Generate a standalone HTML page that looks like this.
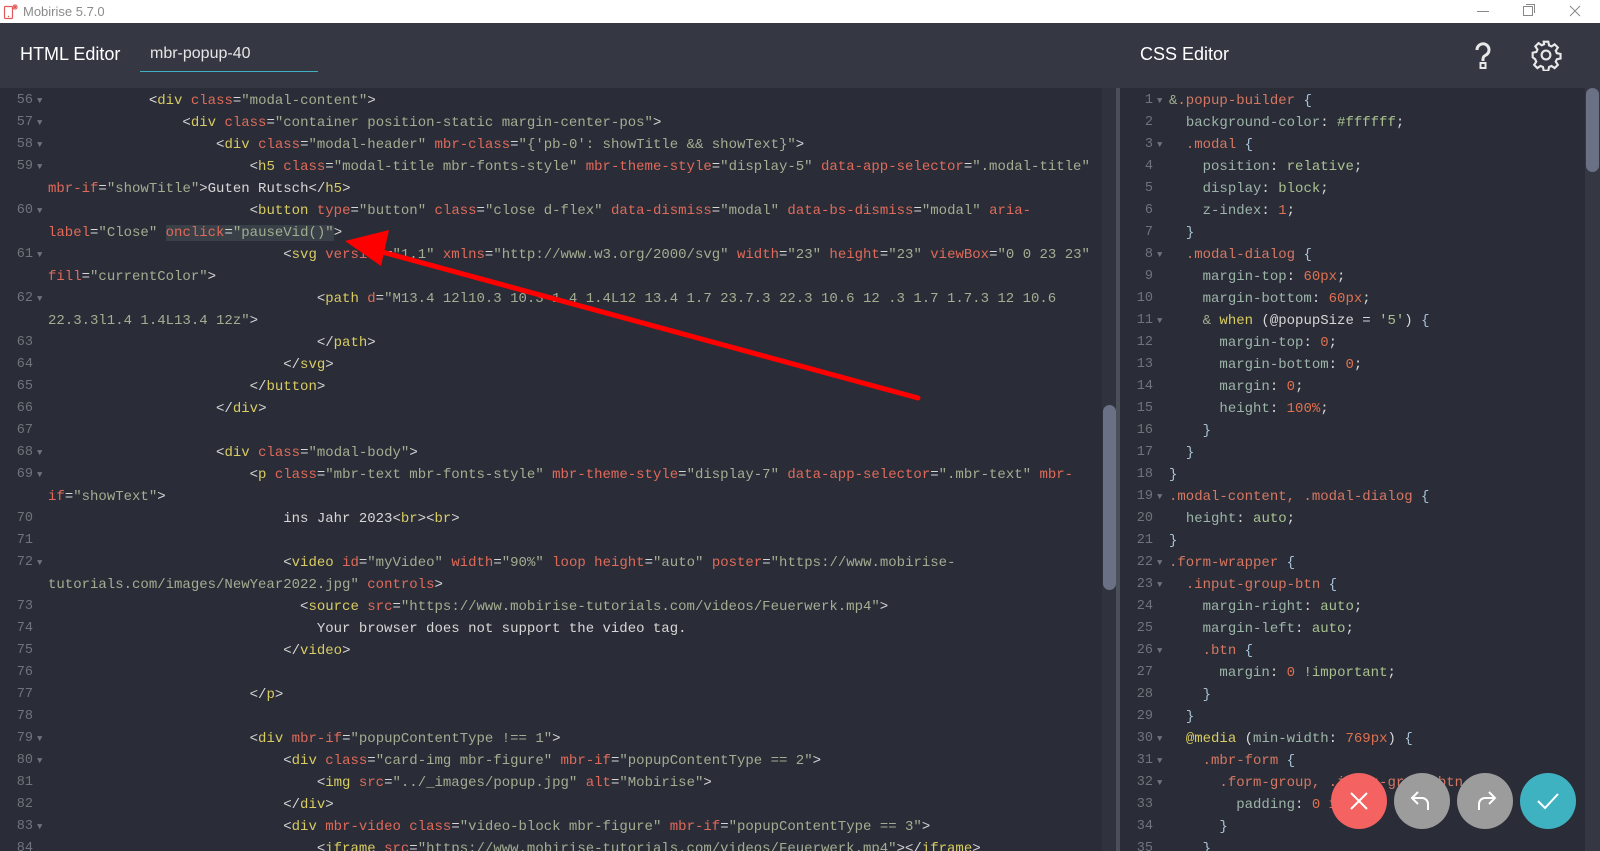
<!DOCTYPE html>
<html><head><meta charset="utf-8">
<style>
*{margin:0;padding:0;box-sizing:border-box}
body{width:1600px;height:851px;overflow:hidden;background:#2a2d37;font-family:"Liberation Sans",sans-serif;position:relative}
#tb{position:absolute;left:0;top:0;width:1600px;height:23px;background:#fff}
#tb .t{position:absolute;left:23px;top:4px;font-size:13px;color:#8a8a8a}
#hd{position:absolute;left:0;top:23px;width:1600px;height:65px;background:#353843}
.h{position:absolute;color:#fff;font-size:18px;top:21px}
#ed{position:absolute;left:0;top:90px;width:1102px;height:761px;background:#2a2d37;overflow:hidden}
#ce{position:absolute;left:1120px;top:90px;width:465px;height:761px;background:#2a2d37;overflow:hidden}
.r{position:absolute;left:0;height:22px;line-height:22px;font-family:"Liberation Mono",monospace;font-size:14px;white-space:pre;color:#d7d7d7}
.n{position:absolute;width:33px;text-align:right;color:#6f737b;font-size:13.5px}
.f{position:absolute;color:#6f737b;font-size:9px}
.c{position:absolute}
.t{color:#d9cc62}.a{color:#e06a5a}.s{color:#a3ad91}.p{color:#e0e0e0}
.sel{color:#d57762}.pr{color:#9db4a9}.v{color:#a9c190}.nu{color:#e0704f}.b{color:#a8c2d8}.k{color:#d9cc62}
.hl{background:#3a4047}
</style></head><body>
<div id="tb">
<svg style="position:absolute;left:3px;top:3px" width="16" height="17" viewBox="0 0 16 17"><rect x="1.5" y="3.5" width="8" height="12" rx="1" fill="none" stroke="#e05a5a" stroke-width="1.2"/><circle cx="5.5" cy="13.5" r=".7" fill="#e05a5a"/><path d="M12 1v6M9 4h6M10 2l4 4M14 2l-4 4" stroke="#e05a5a" stroke-width="1"/></svg>
<span class="t">Mobirise 5.7.0</span>
<div style="position:absolute;left:1477px;top:11px;width:12px;height:1px;background:#888"></div>
<div style="position:absolute;left:1523px;top:6px;width:10px;height:10px;border:1px solid #888"></div>
<div style="position:absolute;left:1526px;top:4px;width:9px;height:9px;border-top:1px solid #888;border-right:1px solid #888"></div>
<svg style="position:absolute;left:1569px;top:5px" width="12" height="12"><path d="M1 1l10 10M11 1L1 11" stroke="#888" stroke-width="1"/></svg>
</div>
<div id="hd">
<span class="h" style="left:20px">HTML Editor</span>
<span class="h" style="left:150px;font-size:16px;top:22px;color:#e6e6e6">mbr-popup-40</span>
<div style="position:absolute;left:140px;top:48px;width:178px;height:1px;background:#3fb0c2"></div>
<span class="h" style="left:1140px">CSS Editor</span>
<svg style="position:absolute;left:1470px;top:17px" width="26" height="32" viewBox="0 0 26 32"><path d="M7 10a6 6 0 1 1 9 5c-2 1.2-3 2-3 4v2" fill="none" stroke="#e8e8e8" stroke-width="3"/><rect x="10.5" y="23" width="5" height="5" fill="none" stroke="#e8e8e8" stroke-width="2"/></svg>
<svg style="position:absolute;left:1530px;top:16px" width="32" height="32" viewBox="0 0 24 24"><path fill="none" stroke="#e8e8e8" stroke-width="1.6" d="M10.3 2h3.4l.6 2.8 1.8.8 2.4-1.6 2.4 2.4-1.6 2.4.8 1.8 2.8.6v3.4l-2.8.6-.8 1.8 1.6 2.4-2.4 2.4-2.4-1.6-1.8.8-.6 2.8h-3.4l-.6-2.8-1.8-.8-2.4 1.6-2.4-2.4 1.6-2.4-.8-1.8L2 13.7v-3.4l2.8-.6.8-1.8L4 5.5 6.4 3.1l2.4 1.6 1.8-.8z"/><circle cx="12" cy="12" r="3.3" fill="none" stroke="#e8e8e8" stroke-width="1.6"/></svg>
</div>

<div id="ed">
<div class="r" style="top:0"><span class="n" style="left:0">56</span><span class="f" style="left:37px">▼</span><span class="c" style="left:48px">            <span class="p">&lt;</span><span class="t">div</span> <span class="a">class</span>=<span class="s">"modal-content"</span>&gt;</span></div>
<div class="r" style="top:22px"><span class="n">57</span><span class="f" style="left:37px">▼</span><span class="c" style="left:48px">                &lt;<span class="t">div</span> <span class="a">class</span>=<span class="s">"container position-static margin-center-pos"</span>&gt;</span></div>
<div class="r" style="top:44px"><span class="n">58</span><span class="f" style="left:37px">▼</span><span class="c" style="left:48px">                    &lt;<span class="t">div</span> <span class="a">class</span>=<span class="s">"modal-header"</span> <span class="a">mbr-class</span>=<span class="s">"{'pb-0': showTitle &amp;&amp; showText}"</span>&gt;</span></div>
<div class="r" style="top:66px"><span class="n">59</span><span class="f" style="left:37px">▼</span><span class="c" style="left:48px">                        &lt;<span class="t">h5</span> <span class="a">class</span>=<span class="s">"modal-title mbr-fonts-style"</span> <span class="a">mbr-theme-style</span>=<span class="s">"display-5"</span> <span class="a">data-app-selector</span>=<span class="s">".modal-title"</span></span></div>
<div class="r" style="top:88px"><span class="c" style="left:48px"><span class="a">mbr-if</span>=<span class="s">"showTitle"</span>&gt;Guten Rutsch&lt;/<span class="t">h5</span>&gt;</span></div>
<div class="r" style="top:110px"><span class="n">60</span><span class="f" style="left:37px">▼</span><span class="c" style="left:48px">                        &lt;<span class="t">button</span> <span class="a">type</span>=<span class="s">"button"</span> <span class="a">class</span>=<span class="s">"close d-flex"</span> <span class="a">data-dismiss</span>=<span class="s">"modal"</span> <span class="a">data-bs-dismiss</span>=<span class="s">"modal"</span> <span class="a">aria-</span></span></div>
<div class="r" style="top:132px"><span class="c" style="left:48px"><span class="a">label</span>=<span class="s">"Close"</span> <span class="hl"><span class="a">onclick</span>=<span class="s">"pauseVid()"</span></span>&gt;</span></div>
<div class="r" style="top:154px"><span class="n">61</span><span class="f" style="left:37px">▼</span><span class="c" style="left:48px">                            &lt;<span class="t">svg</span> <span class="a">version</span>=<span class="s">"1.1"</span> <span class="a">xmlns</span>=<span class="s">"http://www.w3.org/2000/svg"</span> <span class="a">width</span>=<span class="s">"23"</span> <span class="a">height</span>=<span class="s">"23"</span> <span class="a">viewBox</span>=<span class="s">"0 0 23 23"</span></span></div>
<div class="r" style="top:176px"><span class="c" style="left:48px"><span class="a">fill</span>=<span class="s">"currentColor"</span>&gt;</span></div>
<div class="r" style="top:198px"><span class="n">62</span><span class="f" style="left:37px">▼</span><span class="c" style="left:48px">                                &lt;<span class="t">path</span> <span class="a">d</span>=<span class="s">"M13.4 12l10.3 10.3-1.4 1.4L12 13.4 1.7 23.7.3 22.3 10.6 12 .3 1.7 1.7.3 12 10.6</span></span></div>
<div class="r" style="top:220px"><span class="c" style="left:48px"><span class="s">22.3.3l1.4 1.4L13.4 12z"</span>&gt;</span></div>
<div class="r" style="top:242px"><span class="n">63</span><span class="c" style="left:48px">                                &lt;/<span class="t">path</span>&gt;</span></div>
<div class="r" style="top:264px"><span class="n">64</span><span class="c" style="left:48px">                            &lt;/<span class="t">svg</span>&gt;</span></div>
<div class="r" style="top:286px"><span class="n">65</span><span class="c" style="left:48px">                        &lt;/<span class="t">button</span>&gt;</span></div>
<div class="r" style="top:308px"><span class="n">66</span><span class="c" style="left:48px">                    &lt;/<span class="t">div</span>&gt;</span></div>
<div class="r" style="top:330px"><span class="n">67</span></div>
<div class="r" style="top:352px"><span class="n">68</span><span class="f" style="left:37px">▼</span><span class="c" style="left:48px">                    &lt;<span class="t">div</span> <span class="a">class</span>=<span class="s">"modal-body"</span>&gt;</span></div>
<div class="r" style="top:374px"><span class="n">69</span><span class="f" style="left:37px">▼</span><span class="c" style="left:48px">                        &lt;<span class="t">p</span> <span class="a">class</span>=<span class="s">"mbr-text mbr-fonts-style"</span> <span class="a">mbr-theme-style</span>=<span class="s">"display-7"</span> <span class="a">data-app-selector</span>=<span class="s">".mbr-text"</span> <span class="a">mbr-</span></span></div>
<div class="r" style="top:396px"><span class="c" style="left:48px"><span class="a">if</span>=<span class="s">"showText"</span>&gt;</span></div>
<div class="r" style="top:418px"><span class="n">70</span><span class="c" style="left:48px">                            ins Jahr 2023&lt;<span class="t">br</span>&gt;&lt;<span class="t">br</span>&gt;</span></div>
<div class="r" style="top:440px"><span class="n">71</span></div>
<div class="r" style="top:462px"><span class="n">72</span><span class="f" style="left:37px">▼</span><span class="c" style="left:48px">                            &lt;<span class="t">video</span> <span class="a">id</span>=<span class="s">"myVideo"</span> <span class="a">width</span>=<span class="s">"90%"</span> <span class="a">loop</span> <span class="a">height</span>=<span class="s">"auto"</span> <span class="a">poster</span>=<span class="s">"https://www.mobirise-</span></span></div>
<div class="r" style="top:484px"><span class="c" style="left:48px"><span class="s">tutorials.com/images/NewYear2022.jpg"</span> <span class="a">controls</span>&gt;</span></div>
<div class="r" style="top:506px"><span class="n">73</span><span class="c" style="left:48px">                              &lt;<span class="t">source</span> <span class="a">src</span>=<span class="s">"https://www.mobirise-tutorials.com/videos/Feuerwerk.mp4"</span>&gt;</span></div>
<div class="r" style="top:528px"><span class="n">74</span><span class="c" style="left:48px">                                Your browser does not support the video tag.</span></div>
<div class="r" style="top:550px"><span class="n">75</span><span class="c" style="left:48px">                            &lt;/<span class="t">video</span>&gt;</span></div>
<div class="r" style="top:572px"><span class="n">76</span></div>
<div class="r" style="top:594px"><span class="n">77</span><span class="c" style="left:48px">                        &lt;/<span class="t">p</span>&gt;</span></div>
<div class="r" style="top:616px"><span class="n">78</span></div>
<div class="r" style="top:638px"><span class="n">79</span><span class="f" style="left:37px">▼</span><span class="c" style="left:48px">                        &lt;<span class="t">div</span> <span class="a">mbr-if</span>=<span class="s">"popupContentType !== 1"</span>&gt;</span></div>
<div class="r" style="top:660px"><span class="n">80</span><span class="f" style="left:37px">▼</span><span class="c" style="left:48px">                            &lt;<span class="t">div</span> <span class="a">class</span>=<span class="s">"card-img mbr-figure"</span> <span class="a">mbr-if</span>=<span class="s">"popupContentType == 2"</span>&gt;</span></div>
<div class="r" style="top:682px"><span class="n">81</span><span class="c" style="left:48px">                                &lt;<span class="t">img</span> <span class="a">src</span>=<span class="s">"../_images/popup.jpg"</span> <span class="a">alt</span>=<span class="s">"Mobirise"</span>&gt;</span></div>
<div class="r" style="top:704px"><span class="n">82</span><span class="c" style="left:48px">                            &lt;/<span class="t">div</span>&gt;</span></div>
<div class="r" style="top:726px"><span class="n">83</span><span class="f" style="left:37px">▼</span><span class="c" style="left:48px">                            &lt;<span class="t">div</span> <span class="a">mbr-video</span> <span class="a">class</span>=<span class="s">"video-block mbr-figure"</span> <span class="a">mbr-if</span>=<span class="s">"popupContentType == 3"</span>&gt;</span></div>
<div class="r" style="top:748px"><span class="n">84</span><span class="c" style="left:48px">                                &lt;<span class="t">iframe</span> <span class="a">src</span>=<span class="s">"https://www.mobirise-tutorials.com/videos/Feuerwerk.mp4"</span>&gt;&lt;/<span class="t">iframe</span>&gt;</span></div>
</div>
<div style="position:absolute;left:1102px;top:88px;width:15px;height:763px;background:#30333d"></div>
<div style="position:absolute;left:1103px;top:405px;width:13px;height:185px;border-radius:7px;background:#6b7185"></div>
<div style="position:absolute;left:1116px;top:88px;width:4px;height:763px;background:#4b4f58"></div>

<div id="ce">
<div class="r" style="top:0"><span class="n" style="left:0">1</span><span class="f" style="left:37px">▼</span><span class="c" style="left:49px"><span class="s">&amp;</span><span class="sel">.popup-builder</span> <span class="b">{</span></span></div>
<div class="r" style="top:22px"><span class="n">2</span><span class="c" style="left:49px">  <span class="pr">background-color</span>: <span class="v">#ffffff</span>;</span></div>
<div class="r" style="top:44px"><span class="n">3</span><span class="f" style="left:37px">▼</span><span class="c" style="left:49px">  <span class="sel">.modal</span> <span class="b">{</span></span></div>
<div class="r" style="top:66px"><span class="n">4</span><span class="c" style="left:49px">    <span class="pr">position</span>: <span class="v">relative</span>;</span></div>
<div class="r" style="top:88px"><span class="n">5</span><span class="c" style="left:49px">    <span class="pr">display</span>: <span class="v">block</span>;</span></div>
<div class="r" style="top:110px"><span class="n">6</span><span class="c" style="left:49px">    <span class="pr">z-index</span>: <span class="nu">1</span>;</span></div>
<div class="r" style="top:132px"><span class="n">7</span><span class="c" style="left:49px">  <span class="b">}</span></span></div>
<div class="r" style="top:154px"><span class="n">8</span><span class="f" style="left:37px">▼</span><span class="c" style="left:49px">  <span class="sel">.modal-dialog</span> <span class="b">{</span></span></div>
<div class="r" style="top:176px"><span class="n">9</span><span class="c" style="left:49px">    <span class="pr">margin-top</span>: <span class="nu">60px</span>;</span></div>
<div class="r" style="top:198px"><span class="n">10</span><span class="c" style="left:49px">    <span class="pr">margin-bottom</span>: <span class="nu">60px</span>;</span></div>
<div class="r" style="top:220px"><span class="n">11</span><span class="f" style="left:37px">▼</span><span class="c" style="left:49px">    <span class="s">&amp;</span> <span class="k">when</span> (@popupSize = <span class="v">'5'</span>) <span class="b">{</span></span></div>
<div class="r" style="top:242px"><span class="n">12</span><span class="c" style="left:49px">      <span class="pr">margin-top</span>: <span class="nu">0</span>;</span></div>
<div class="r" style="top:264px"><span class="n">13</span><span class="c" style="left:49px">      <span class="pr">margin-bottom</span>: <span class="nu">0</span>;</span></div>
<div class="r" style="top:286px"><span class="n">14</span><span class="c" style="left:49px">      <span class="pr">margin</span>: <span class="nu">0</span>;</span></div>
<div class="r" style="top:308px"><span class="n">15</span><span class="c" style="left:49px">      <span class="pr">height</span>: <span class="nu">100%</span>;</span></div>
<div class="r" style="top:330px"><span class="n">16</span><span class="c" style="left:49px">    <span class="b">}</span></span></div>
<div class="r" style="top:352px"><span class="n">17</span><span class="c" style="left:49px">  <span class="b">}</span></span></div>
<div class="r" style="top:374px"><span class="n">18</span><span class="c" style="left:49px"><span class="b">}</span></span></div>
<div class="r" style="top:396px"><span class="n">19</span><span class="f" style="left:37px">▼</span><span class="c" style="left:49px"><span class="sel">.modal-content, .modal-dialog</span> <span class="b">{</span></span></div>
<div class="r" style="top:418px"><span class="n">20</span><span class="c" style="left:49px">  <span class="pr">height</span>: <span class="v">auto</span>;</span></div>
<div class="r" style="top:440px"><span class="n">21</span><span class="c" style="left:49px"><span class="b">}</span></span></div>
<div class="r" style="top:462px"><span class="n">22</span><span class="f" style="left:37px">▼</span><span class="c" style="left:49px"><span class="sel">.form-wrapper</span> <span class="b">{</span></span></div>
<div class="r" style="top:484px"><span class="n">23</span><span class="f" style="left:37px">▼</span><span class="c" style="left:49px">  <span class="sel">.input-group-btn</span> <span class="b">{</span></span></div>
<div class="r" style="top:506px"><span class="n">24</span><span class="c" style="left:49px">    <span class="pr">margin-right</span>: <span class="v">auto</span>;</span></div>
<div class="r" style="top:528px"><span class="n">25</span><span class="c" style="left:49px">    <span class="pr">margin-left</span>: <span class="v">auto</span>;</span></div>
<div class="r" style="top:550px"><span class="n">26</span><span class="f" style="left:37px">▼</span><span class="c" style="left:49px">    <span class="sel">.btn</span> <span class="b">{</span></span></div>
<div class="r" style="top:572px"><span class="n">27</span><span class="c" style="left:49px">      <span class="pr">margin</span>: <span class="nu">0</span> <span class="v">!important</span>;</span></div>
<div class="r" style="top:594px"><span class="n">28</span><span class="c" style="left:49px">    <span class="b">}</span></span></div>
<div class="r" style="top:616px"><span class="n">29</span><span class="c" style="left:49px">  <span class="b">}</span></span></div>
<div class="r" style="top:638px"><span class="n">30</span><span class="f" style="left:37px">▼</span><span class="c" style="left:49px">  <span class="k">@media</span> (<span class="pr">min-width</span>: <span class="nu">769px</span>) <span class="b">{</span></span></div>
<div class="r" style="top:660px"><span class="n">31</span><span class="f" style="left:37px">▼</span><span class="c" style="left:49px">    <span class="sel">.mbr-form</span> <span class="b">{</span></span></div>
<div class="r" style="top:682px"><span class="n">32</span><span class="f" style="left:37px">▼</span><span class="c" style="left:49px">      <span class="sel">.form-group, .input-group-btn</span> <span class="b">{</span></span></div>
<div class="r" style="top:704px"><span class="n">33</span><span class="c" style="left:49px">        <span class="pr">padding</span>: <span class="nu">0</span> <span class="nu">1rem</span>;</span></div>
<div class="r" style="top:726px"><span class="n">34</span><span class="c" style="left:49px">      <span class="b">}</span></span></div>
<div class="r" style="top:748px"><span class="n">35</span><span class="c" style="left:49px">    <span class="b">}</span></span></div>
</div>
<div style="position:absolute;left:1585px;top:88px;width:15px;height:763px;background:#353843"></div>
<div style="position:absolute;left:1586px;top:88px;width:13px;height:84px;border-radius:7px;background:#6b7185"></div>

<svg style="position:absolute;left:0;top:0" width="1600" height="851">
<line x1="918" y1="398" x2="375" y2="250" stroke="#f00" stroke-width="5" stroke-linecap="round"/>
<polygon points="345,241 389,230 381,266" fill="#f00"/>
</svg>

<div style="position:absolute;left:1331px;top:773px;width:56px;height:56px;border-radius:50%;background:#f56262"></div>
<svg style="position:absolute;left:1349px;top:791px" width="20" height="20"><path d="M2 2l16 16M18 2L2 18" stroke="#fff" stroke-width="2"/></svg>
<div style="position:absolute;left:1394px;top:773px;width:56px;height:56px;border-radius:50%;background:#9c9c9c"></div>
<svg style="position:absolute;left:1410px;top:790px" width="24" height="22"><path d="M8 2L2 8l6 6M2 8h10a6 6 0 0 1 6 6v6" fill="none" stroke="#fff" stroke-width="2"/></svg>
<div style="position:absolute;left:1457px;top:773px;width:56px;height:56px;border-radius:50%;background:#9c9c9c"></div>
<svg style="position:absolute;left:1473px;top:790px" width="24" height="22"><path d="M16 2l6 6-6 6M22 8H12a6 6 0 0 0-6 6v6" fill="none" stroke="#fff" stroke-width="2"/></svg>
<div style="position:absolute;left:1520px;top:773px;width:56px;height:56px;border-radius:50%;background:#3fb2c2"></div>
<svg style="position:absolute;left:1536px;top:791px" width="24" height="20"><path d="M2 10l7 7L22 3" fill="none" stroke="#fff" stroke-width="2"/></svg>
</body></html>
